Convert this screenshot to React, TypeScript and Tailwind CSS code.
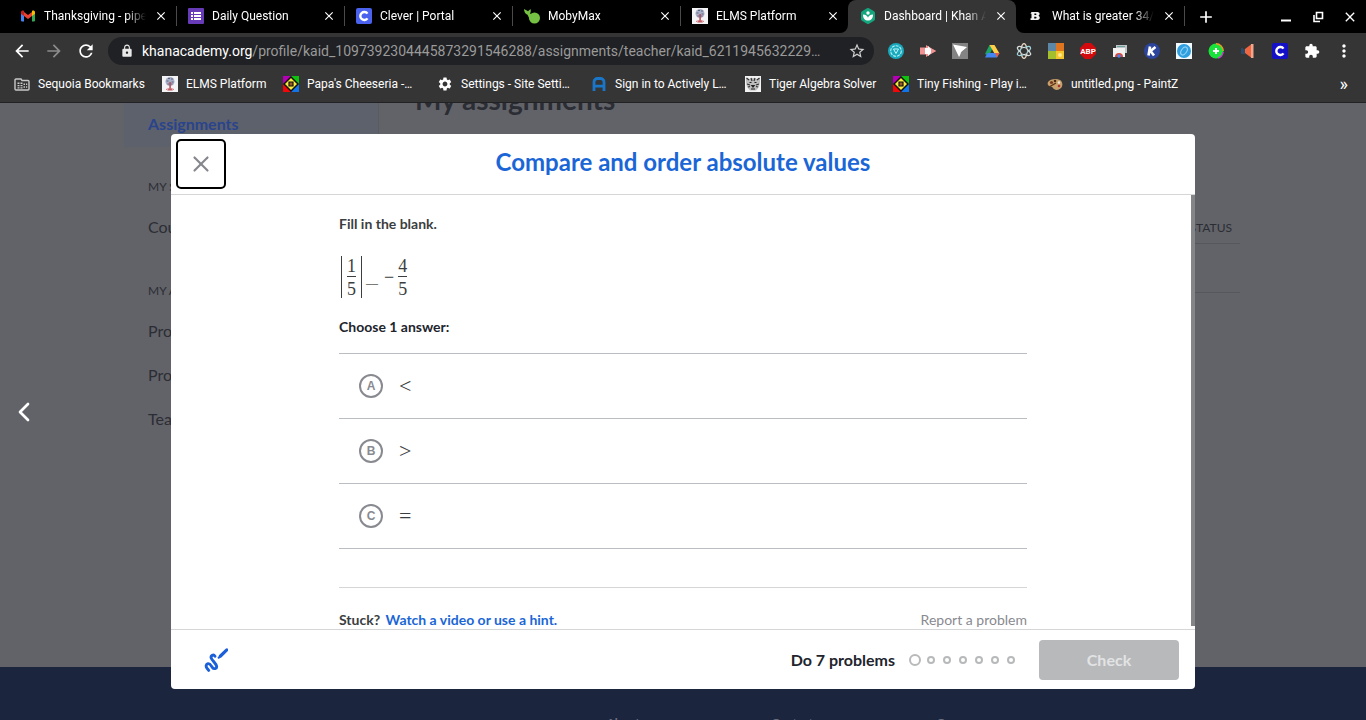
import React, { useState } from "react";
import { ChevronLeft, X } from "lucide-react";
import {
  MdAdd,
  MdArrowBack,
  MdArrowForward,
  MdClose,
  MdExtension,
  MdLock,
  MdMoreVert,
  MdRefresh,
  MdSettings,
  MdStarBorder,
} from "react-icons/md";

/* ---------- Site icons ---------- */

const GmailIcon = () => (
  <svg viewBox="0 0 16 16" className="h-4 w-4">
    <path d="M1 4v8.500a1 1 0 0 0 1 1h2V6z" fill="#4285f4" />
    <path d="M15 4v8.500a1 1 0 0 1-1 1h-2V6z" fill="#34a853" />
    <path d="M12 4.500V8l3-2.300V4.300c0-1.700-1.800-2.300-3-1.300z" fill="#fbbc04" />
    <path d="M4 8V4l4 3 4-3v4l-4 3z" fill="#ea4335" />
    <path d="M1 4.300v1.400L4 8V3C2.800 2 1 2.600 1 4.300z" fill="#c5221f" />
  </svg>
);

const FormsIcon = () => (
  <svg viewBox="0 0 16 16" className="h-4 w-4">
    <rect width="16" height="16" rx="1" fill="#673ab7" />
    <path d="M6 4h7v2H6zM6 7h7v2H6zM6 10h7v2H6zM3 4h2v2H3zM3 7h2v2H3zM3 10h2v2H3z" fill="#fff" />
  </svg>
);

const CleverIcon = ({ fill = "#4a62ee" }: { fill?: string }) => (
  <svg viewBox="0 0 16 16" className="h-4 w-4">
    <rect width="16" height="16" rx="2" fill={fill} />
    <path d="M11.500 5.600A4 4 0 1 0 11.500 10.400" fill="none" stroke="#fff" strokeWidth="2.400" />
  </svg>
);

const MobyIcon = () => (
  <svg viewBox="0 0 16 16" className="h-4 w-4">
    <circle cx="10.500" cy="10" r="5.500" fill="#76c043" />
    <path d="M0 1c2 1 3 1.500 4 2.200L6.500 1c.6 2 .3 3.400-.7 4.600L9 6.500 6 12 3.500 6.800C1.500 6 0 4 0 1z" fill="#76c043" />
  </svg>
);

const ElmsIcon = () => (
  <svg viewBox="0 0 16 16" className="h-4 w-4">
    <rect width="16" height="16" fill="#f4f4f6" />
    <circle cx="8" cy="5.500" r="4.500" fill="#a9afc4" />
    <path d="M4.500 5h2M9 3h2M5.500 8h5M6 2.500h2M9.500 6h2" stroke="#5c6688" strokeWidth="1" />
    <path d="M7.300 6h1.600v6l2 2.500H5.200l2.100-2.500z" fill="#b9535c" />
    <path d="M4 13.500c2-1 6-1 8 0" stroke="#d0747b" fill="none" />
  </svg>
);

const KhanIcon = () => (
  <svg viewBox="0 0 16 16" className="h-4 w-4">
    <path d="M7 .3a2 2 0 0 1 2 0l5 2.900a2 2 0 0 1 1 1.700v6.200a2 2 0 0 1-1 1.700l-5 2.900a2 2 0 0 1-2 0l-5-2.900a2 2 0 0 1-1-1.700V4.900a2 2 0 0 1 1-1.700z" fill="#14a57d" />
    <circle cx="8" cy="5" r="1.700" fill="#fff" />
    <path d="M3 6.500c3 0 4.400 1.400 5 3.200.6-1.800 2-3.200 5-3.200 0 4-2 6-5 6s-5-2-5-6z" fill="#fff" />
  </svg>
);

const BrainlyIcon = () => (
  <svg viewBox="0 0 16 16" className="h-4 w-4">
    <path fillRule="evenodd" d="M3.500 4h6c2.500 0 2.800 3 .8 3.800 2.400.8 1.800 4.200-.8 4.200h-7v-1.800h1V5.800h-1zM6.400 5.500V7h1.400c.9 0 .9-1.500 0-1.500zM6.200 8.700v1.700h1.600c1 0 1-1.700 0-1.700z" fill="#f2f2f2" />
  </svg>
);

const FolderIcon = () => (
  <svg viewBox="0 0 16 16" className="h-4 w-4">
    <path d="M2 3h5l1 1.500h6a1 1 0 0 1 1 1V13a1 1 0 0 1-1 1H2a1 1 0 0 1-1-1V4a1 1 0 0 1 1-1z" fill="none" stroke="#c8c8c8" strokeWidth="1.400" />
    <path d="M3.500 6.500h2v1.500h-2zM6.500 6.500h2v1.500h-2zM3.500 9h2v1.200h-2zM6.500 9h2v1.200h-2zM3.500 11.200h2v1.200h-2zM6.500 11.200h2v1.200h-2zM9.500 7.500h1.500V9H9.500zM12 7.500h1.200V9H12zM9.500 10.300H11v1.500H9.500zM12 10.300h1.200v1.500H12z" fill="#c8c8c8" />
  </svg>
);

const GameIcon = () => (
  <svg viewBox="0 0 16 16" className="h-4 w-4">
    <path d="M0 0h8v8H0z" fill="#b400b4" />
    <path d="M8 0h8v8H8z" fill="#0fc20f" />
    <path d="M0 8h8v8H0z" fill="#f00808" />
    <path d="M8 8h8v8H8z" fill="#1374e8" />
    <path d="M8 1l7 7-7 7-7-7z" fill="#f7ec3c" stroke="#111" strokeWidth="1.500" />
    <path d="M6 6h4v4H6z" fill="#9a5a2c" stroke="#111" strokeWidth="1.200" />
  </svg>
);

const ActivelyIcon = () => (
  <svg viewBox="0 0 16 16" className="h-4 w-4">
    <path d="M3 15V6a3.500 3.500 0 0 1 3.500-3.500h3A3.500 3.500 0 0 1 13 6v9M3 10.200h10" fill="none" stroke="#1976c8" strokeWidth="2.800" />
  </svg>
);

const TigerIcon = () => (
  <svg viewBox="0 0 16 16" className="h-4 w-4">
    <rect width="16" height="16" fill="#f2f2f2" />
    <path d="M1 2l3 1 4-1 4 1 3-1v4l-1 5-3 3.500H5L2 11 1 6z" fill="#bdbdbd" />
    <path d="M1.500 2L4 4M14.500 2L12 4M6 2l1 3M10 2L9 5M2 8l3 1M14 8l-3 1M3 11l2-.5M13 11l-2-.5" stroke="#333" strokeWidth="1.200" />
    <path d="M4.500 6.500h2M9.500 6.500h2M6.800 9.500h2.400L8 11zM6 13h4" stroke="#222" fill="#222" strokeWidth="1.100" />
  </svg>
);

const PaletteIcon = () => (
  <svg viewBox="0 0 16 16" className="h-4 w-4">
    <path d="M1 6c2-3 8-4 12-2 3 2 3 6 1 8-3 3-7 2-8 0-.6-1.600-2-1-3-1.500C1 10 0 8 1 6z" fill="#c9a06c" />
    <circle cx="4.500" cy="6.500" r="1.600" fill="#7a3b1c" />
    <circle cx="8" cy="5" r="1.300" fill="#4c2a18" />
    <circle cx="12" cy="6.500" r="1.200" fill="#f2ead9" />
    <circle cx="12" cy="10" r="1.300" fill="#a33" />
    <path d="M2 11l7-4" stroke="#5b3015" strokeWidth="1.400" />
  </svg>
);

/* ---------- Extension icons ---------- */

const extensions: { name: string; icon: React.ReactNode }[] = [
  {
    name: "Shield",
    icon: (
      <>
        <circle cx="8" cy="8" r="8" fill="#19a9bd" />
        <circle cx="8" cy="8" r="5.300" fill="none" stroke="#b5f1f6" strokeWidth="1.100" strokeDasharray="3 1" />
        <path d="M5.500 6h5L8 10.500z" fill="none" stroke="#c9f6fa" />
      </>
    ),
  },
  {
    name: "Screencast",
    icon: (
      <>
        <path d="M0 4.500h6V2l10 6-10 6v-2.500H0z" fill="#f29393" />
        <path d="M5 5h3V3l5 5-5 5v-2H5z" fill="#fff" />
        <path d="M11 5.500L16 8l-5 2.500z" fill="#f29393" />
      </>
    ),
  },
  {
    name: "Sender",
    icon: (
      <>
        <rect width="16" height="16" fill="#838383" />
        <path d="M1 1.500l14 2.500-4.500 4-3.500 6z" fill="#fff" />
        <path d="M8.500 14l1-5 3.500-2" stroke="#838383" fill="none" />
      </>
    ),
  },
  {
    name: "Drive",
    icon: (
      <>
        <path d="M5.500 2h4.500L5 13 1 11z" fill="#1da362" />
        <path d="M5.500 2h5L15.500 10.500h-5z" fill="#ffcf48" />
        <path d="M3.500 10h12L13 14.500H1z" fill="#4286f4" />
        <path d="M11 10h4.500L13 14.500z" fill="#ea5a3c" />
      </>
    ),
  },
  {
    name: "Atom",
    icon: (
      <>
        <ellipse cx="8" cy="8" rx="3" ry="7.400" fill="none" stroke="#e6d2bd" strokeWidth="1.300" />
        <ellipse cx="8" cy="8" rx="3" ry="7.400" fill="none" stroke="#9dd3dc" strokeWidth="1.300" transform="rotate(60 8 8)" />
        <ellipse cx="8" cy="8" rx="3" ry="7.400" fill="none" stroke="#d7dcdd" strokeWidth="1.300" transform="rotate(120 8 8)" />
        <circle cx="8" cy="8" r="3" fill="#333" />
      </>
    ),
  },
  {
    name: "Colour tiles",
    icon: (
      <>
        <path d="M0 0h8v8H0z" fill="#5d87a6" />
        <path d="M8 0h8v8H8z" fill="#e0751f" />
        <path d="M0 8h8v8H0z" fill="#a4bf2d" />
        <path d="M8 8h8v8H8z" fill="#f5c62c" />
        <circle cx="12" cy="12" r="2" fill="#ffe98c" />
      </>
    ),
  },
  {
    name: "AdBlock Plus",
    icon: (
      <>
        <path d="M5 0h6l5 5v6l-5 5H5l-5-5V5z" fill="#d20a0e" />
        <text x="8" y="10.900" textAnchor="middle" fontSize="8" fontWeight="700" fontFamily="Roboto, sans-serif" fill="#fff">
          ABP
        </text>
      </>
    ),
  },
  {
    name: "Web Store",
    icon: (
      <>
        <path d="M4 2h11v8H4z" fill="#bfc5c7" />
        <path d="M1 5h12v9H1z" fill="#f2f2f2" />
        <path d="M3 14a4 4 0 0 1 8 0z" fill="#db4437" />
        <circle cx="7" cy="13" r="1.800" fill="#4285f4" />
        <path d="M5 3.500h8" stroke="#6ba0a0" />
      </>
    ),
  },
  {
    name: "Kami",
    icon: (
      <>
        <circle cx="8" cy="8" r="8" fill="#2c459c" />
        <path d="M6 3.500L4.500 12.500M11.500 4L6.500 8l3.500 4.500" fill="none" stroke="#fff" strokeWidth="2.600" />
      </>
    ),
  },
  {
    name: "Compass",
    icon: (
      <>
        <rect width="16" height="16" fill="#f3fafe" />
        <circle cx="8" cy="8" r="7" fill="#2f9fe0" />
        <ellipse cx="8" cy="8" rx="2.600" ry="4.400" fill="none" stroke="#8fd0f5" strokeWidth="1.200" transform="rotate(35 8 8)" />
      </>
    ),
  },
  {
    name: "Colour wheel",
    icon: (
      <>
        <circle cx="8" cy="8" r="7.500" fill="#19e33a" />
        <path d="M8 .8A7.200 7.200 0 0 1 15.200 8" fill="none" stroke="#e69a2a" strokeWidth="1.500" />
        <path d="M15 9a7 7 0 0 1-5 6" fill="none" stroke="#c742c9" strokeWidth="1.500" />
        <path d="M8 5v6M5 8h6" stroke="#fff" strokeWidth="2" />
      </>
    ),
  },
  {
    name: "Megaphone",
    icon: (
      <>
        <path d="M5 6l6-4.500v13L5 10z" fill="#f0663f" />
        <path d="M11 1h2.500v14H11z" fill="#f0a78f" />
        <path d="M2 5v6M4 6v5" stroke="#28507a" strokeWidth="1.500" />
      </>
    ),
  },
];

/* ---------- Browser chrome ---------- */

interface Tab {
  title: string;
  icon: React.ReactNode;
  active?: boolean;
}

const tabs: Tab[] = [
  { title: "Thanksgiving - piper", icon: <GmailIcon /> },
  { title: "Daily Question", icon: <FormsIcon /> },
  { title: "Clever | Portal", icon: <CleverIcon /> },
  { title: "MobyMax", icon: <MobyIcon /> },
  { title: "ELMS Platform", icon: <ElmsIcon /> },
  { title: "Dashboard | Khan Academy", icon: <KhanIcon />, active: true },
  { title: "What is greater 34/5", icon: <BrainlyIcon /> },
];

const bookmarks = [
  { title: "Sequoia Bookmarks", icon: <FolderIcon />, width: "w-[108px]" },
  { title: "ELMS Platform", icon: <ElmsIcon />, width: "w-[81px]" },
  { title: "Papa's Cheeseria -…", icon: <GameIcon />, width: "w-[114px]" },
  { title: "Settings - Site Setti…", icon: <MdSettings className="h-4 w-4 text-white" />, width: "w-[114px]" },
  { title: "Sign in to Actively L…", icon: <ActivelyIcon />, width: "w-[114px]" },
  { title: "Tiger Algebra Solver", icon: <TigerIcon />, width: "w-[108px]" },
  { title: "Tiny Fishing - Play i…", icon: <GameIcon />, width: "w-[114px]" },
  { title: "untitled.png - PaintZ", icon: <PaletteIcon />, width: "w-[114px]" },
];

function TabStrip() {
  return (
    <div className="flex h-[33px] shrink-0 items-stretch bg-black pl-2 text-white">
      {tabs.map((tab, i) => (
        <div
          key={tab.title}
          className={`relative flex w-[168px] min-w-0 items-center pb-px pl-3 pr-2 ${
            tab.active
              ? "rounded-t-lg bg-[#353535]"
              : tabs[i + 1]?.active
                ? ""
                : "after:absolute after:-right-px after:h-5 after:w-px after:bg-[#4a4a4a]"
          }`}
        >
          {tab.active && (
            <>
              <svg viewBox="0 0 8 8" className="absolute -left-2 bottom-0 h-2 w-2">
                <path d="M8 0v8H0a8 8 0 0 0 8-8z" fill="#353535" />
              </svg>
              <svg viewBox="0 0 8 8" className="absolute -right-2 bottom-0 h-2 w-2">
                <path d="M0 0v8h8a8 8 0 0 1-8-8z" fill="#353535" />
              </svg>
            </>
          )}
          <span className="shrink-0">{tab.icon}</span>
          <a href="#" className="ml-2 min-w-0 flex-1 overflow-hidden whitespace-nowrap text-xs mask-r-from-80%">
            {tab.title}
          </a>
          <button aria-label="Close tab" className="ml-2 shrink-0">
            <MdClose className="h-3.5 w-3.5" />
          </button>
        </div>
      ))}
      <button aria-label="New tab" className="ml-3 flex items-center">
        <MdAdd className="h-5 w-5" />
      </button>
      <div className="ml-auto flex items-center">
        <button aria-label="Minimize" className="flex w-8 justify-center">
          <svg viewBox="0 0 12 12" className="h-3 w-3">
            <path d="M1 9.500h10" stroke="#fff" strokeWidth="2" />
          </svg>
        </button>
        <button aria-label="Restore" className="flex w-8 justify-center">
          <svg viewBox="0 0 12 12" className="h-3 w-3">
            <path d="M4.500 1.500h6v6h-6zM2 4v6.500h6" fill="none" stroke="#fff" strokeWidth="1.600" />
          </svg>
        </button>
        <button aria-label="Close" className="flex w-8 justify-center">
          <MdClose className="h-4 w-4" />
        </button>
      </div>
    </div>
  );
}

function Toolbar() {
  return (
    <div className="flex h-9 shrink-0 items-center bg-[#353535] px-1.5 text-white">
      <button aria-label="Back" className="flex w-8 justify-center">
        <MdArrowBack className="h-5 w-5" />
      </button>
      <button aria-label="Forward" className="flex w-8 justify-center text-[#8c8c8c]">
        <MdArrowForward className="h-5 w-5" />
      </button>
      <button aria-label="Reload" className="flex w-8 justify-center">
        <MdRefresh className="h-5 w-5" />
      </button>
      <label className="mx-1.5 flex h-7 min-w-0 flex-1 items-center rounded-full bg-[#202124] pl-3 pr-2 text-sm">
        <MdLock className="mr-2 h-3.5 w-3.5 shrink-0 text-[#e8e8e8]" />
        <span>khanacademy.org</span>
        <input
          aria-label="Address"
          readOnly
          value="/profile/kaid_1097392304445873291546288/assignments/teacher/kaid_6211945632229…"
          className="min-w-0 flex-1 bg-transparent text-[#9a9a9a] outline-none"
        />
        <MdStarBorder className="h-[18px] w-[18px] shrink-0 text-[#d0d0d0]" />
      </label>
      {extensions.map((ext) => (
        <button key={ext.name} aria-label={ext.name} className="flex w-8 shrink-0 justify-center">
          <svg viewBox="0 0 16 16" className="h-4 w-4">
            {ext.icon}
          </svg>
        </button>
      ))}
      <button aria-label="Clever" className="flex w-8 shrink-0 justify-center">
        <CleverIcon fill="#1410c8" />
      </button>
      <button aria-label="Extensions" className="flex w-8 shrink-0 justify-center">
        <MdExtension className="h-4 w-4" />
      </button>
      <button aria-label="Menu" className="flex w-8 shrink-0 justify-center">
        <MdMoreVert className="h-5 w-5" />
      </button>
    </div>
  );
}

function BookmarksBar() {
  return (
    <nav className="flex h-[34px] shrink-0 items-center gap-4 border-b border-[#222224] bg-[#353535] pb-1 pl-3.5 pr-[18px] text-xs text-white">
      {bookmarks.map((b) => (
        <a key={b.title} href="#" className="flex shrink-0 items-center gap-2 whitespace-nowrap">
          {b.icon}
          <span className={b.width}>{b.title}</span>
        </a>
      ))}
      <button aria-label="More bookmarks" className="ml-auto text-lg leading-4">
        »
      </button>
    </nav>
  );
}

/* ---------- Dimmed profile page behind the dialog ---------- */

function ProfilePage() {
  return (
    <div aria-hidden="true" className="flex h-full flex-col overflow-hidden bg-[#626368] text-[#2b2d34]">
      <div className="mx-auto flex w-full max-w-[1118px] flex-1">
        <div className="w-[255px] shrink-0 border-r border-[#5a5b61]">
          <div className="flex h-11 items-center bg-[#5d616c] pb-0.5 pl-6 font-bold text-[#2a448c]">Assignments</div>
          <div className="mt-7 flex h-6 items-center pl-6 text-xs">MY STUFF</div>
          <div className="mt-1.5 flex h-11 items-center pl-6">Courses</div>
          <div className="mt-[30px] flex h-6 items-center pl-6 text-xs">MY ACCOUNT</div>
          <div className="mt-1.5 flex h-11 items-center pl-6">Progress</div>
          <div className="flex h-11 items-center pl-6">Profile</div>
          <div className="flex h-11 items-center pl-6">Teachers</div>
        </div>
        <div className="min-w-0 flex-1 pl-9 pr-0.5">
          <h1 className="-mt-5 text-[28px] leading-8 font-bold">My assignments</h1>
          <div className="mt-[101px] flex h-7 justify-end border-b border-[#56575c] pr-2 text-xs leading-6">STATUS</div>
          <div className="h-[49px] border-b border-[#56575c]" />
        </div>
      </div>
      <div className="h-[53px] shrink-0 bg-[#1b253d]">
        <div className="mx-auto flex w-[592px] justify-end pt-12 text-xs font-bold text-[#6b7080]">
          <span className="w-[165px]">About</span>
          <span className="w-[165px] font-normal">Contact</span>
          <span className="font-normal">Courses</span>
        </div>
      </div>
    </div>
  );
}

/* ---------- Exercise dialog ---------- */

function Fraction({ top, bottom }: { top: string; bottom: string }) {
  return (
    <span className="flex flex-col items-center leading-5">
      <span className="border-b border-[#3b3e40]">{top}</span>
      <span className="mt-0.5">{bottom}</span>
    </span>
  );
}

const choices = [
  { letter: "A", symbol: "<" },
  { letter: "B", symbol: ">" },
  { letter: "C", symbol: "=" },
];

function ExerciseDialog() {
  const [answer, setAnswer] = useState("");

  return (
    <div role="dialog" aria-labelledby="exercise-title" className="flex h-full w-full max-w-5xl flex-col overflow-hidden rounded bg-white">
      {/* Header */}
      <div className="flex h-[61px] shrink-0 border-b border-[#d5d6d8] p-[5px]">
        <button aria-label="Close" className="flex h-[50px] w-[50px] items-center justify-center rounded-[5px] border-2 border-black text-[#85878c]">
          <X className="h-[26px] w-[26px]" />
        </button>
        <h2 id="exercise-title" className="flex-1 pr-[50px] text-center text-2xl leading-[46px] font-bold text-[#1b66d6]">
          Compare and order absolute values
        </h2>
      </div>

      {/* Question */}
      <div className="flex min-h-0 flex-1 overflow-hidden">
        <div className="min-w-0 flex-1">
          <div className="mx-auto flex max-w-[688px] flex-col pt-5 text-sm leading-[18px]">
            <p className="font-bold text-[#3b3e40]">Fill in the blank.</p>
            <div className="mt-[23px] flex h-[42px] items-center pl-0.5 font-['Liberation_Serif',serif] text-lg text-[#3b3e40]">
              <span className="flex h-full items-center border-x border-[#3b3e40] px-[5px]">
                <Fraction top="1" bottom="5" />
              </span>
              <span className="ml-1 pt-1 text-xs">__</span>
              <span className="ml-1.5 mr-1">−</span>
              <Fraction top="4" bottom="5" />
            </div>
            <fieldset className="mt-5">
              <legend className="font-bold text-[#21242c]">Choose 1 answer:</legend>
              <div className="mt-[17px] border-t border-[#babec2]">
                {choices.map((c) => (
                  <label key={c.letter} className="flex h-[65px] cursor-pointer items-center border-b border-[#babec2] pl-5">
                    <span className="grid place-items-center">
                      <input
                        type="radio"
                        name="answer"
                        value={c.letter}
                        checked={answer === c.letter}
                        onChange={() => setAnswer(c.letter)}
                        className="col-start-1 row-start-1 h-6 w-6 appearance-none rounded-full border-2 border-[#888a90]"
                      />
                      <span className="col-start-1 row-start-1 font-['Liberation_Sans',sans-serif] text-xs font-bold text-[#888a90]">
                        {c.letter}
                      </span>
                    </span>
                    <span className="ml-4 font-['Liberation_Serif',serif] text-[22px] text-[#3b3e40]">{c.symbol}</span>
                  </label>
                ))}
              </div>
            </fieldset>
            <div className="mt-[38px] flex justify-between border-t border-[#d5d6d8] pt-[23px]">
              <p className="font-bold text-[#3b3e40]">
                Stuck?{" "}
                <a href="#" className="ml-0.5 text-[#1b66d6]">
                  Watch a video or use a hint.
                </a>
              </p>
              <a href="#" className="text-[#888a90]">
                Report a problem
              </a>
            </div>
          </div>
        </div>
        <div className="mb-[3px] -ml-1 w-1 shrink-0 bg-[#848587]" />
      </div>

      {/* Footer */}
      <div className="flex h-[60px] shrink-0 items-center border-t border-[#d5d6d8] pl-[33px] pr-4">
        <button aria-label="Scratchpad" className="text-[#1b5fd9]">
          <svg viewBox="0 0 24 24" className="h-6 w-6" fill="none" stroke="currentColor" strokeLinecap="round" strokeLinejoin="round">
            <path d="M16.500 8L22.800 1.900" strokeWidth="3.200" />
            <path d="M14.700 9.700l1.800-1.700" strokeWidth="2.200" />
            <path d="M11 8.200C9.500 6 6.200 7.600 7.300 10.200c1 2.400 4.700 5.200 5.300 8 .5 2.600-2.800 3.300-4.300 1.200-1.200-1.700-2.300-4.100-4.300-3.700-2.200.5-2.300 2.800-1.100 4.400l1.800 2.300" strokeWidth="2.900" />
          </svg>
        </button>
        <span className="ml-auto font-bold text-[#21242c]">Do 7 problems</span>
        <div className="ml-3.5 mr-6 flex items-center gap-2">
          <span className="-mr-0.5 h-3 w-3 rounded-full border-2 border-[#b8b9bb]" />
          {[2, 3, 4, 5, 6, 7].map((n) => (
            <span key={n} className="h-2 w-2 rounded-full border-2 border-[#b8b9bb]" />
          ))}
        </div>
        <button disabled className="h-10 w-[140px] rounded bg-[#b8b9bb] font-bold text-[#e2e3e4]">
          Check
        </button>
      </div>
    </div>
  );
}

export default function App() {
  return (
    <div className="flex h-screen flex-col overflow-hidden font-['Roboto',sans-serif]">
      <TabStrip />
      <Toolbar />
      <BookmarksBar />
      <main className="relative min-h-0 flex-1 font-['Lato',sans-serif]">
        <ProfilePage />
        <div className="absolute inset-0 flex justify-center py-[31px]">
          <ExerciseDialog />
        </div>
        <button aria-label="Previous" className="absolute inset-y-0 left-2 my-auto h-8 text-white">
          <ChevronLeft className="h-8 w-8" strokeWidth={2} />
        </button>
      </main>
    </div>
  );
}
